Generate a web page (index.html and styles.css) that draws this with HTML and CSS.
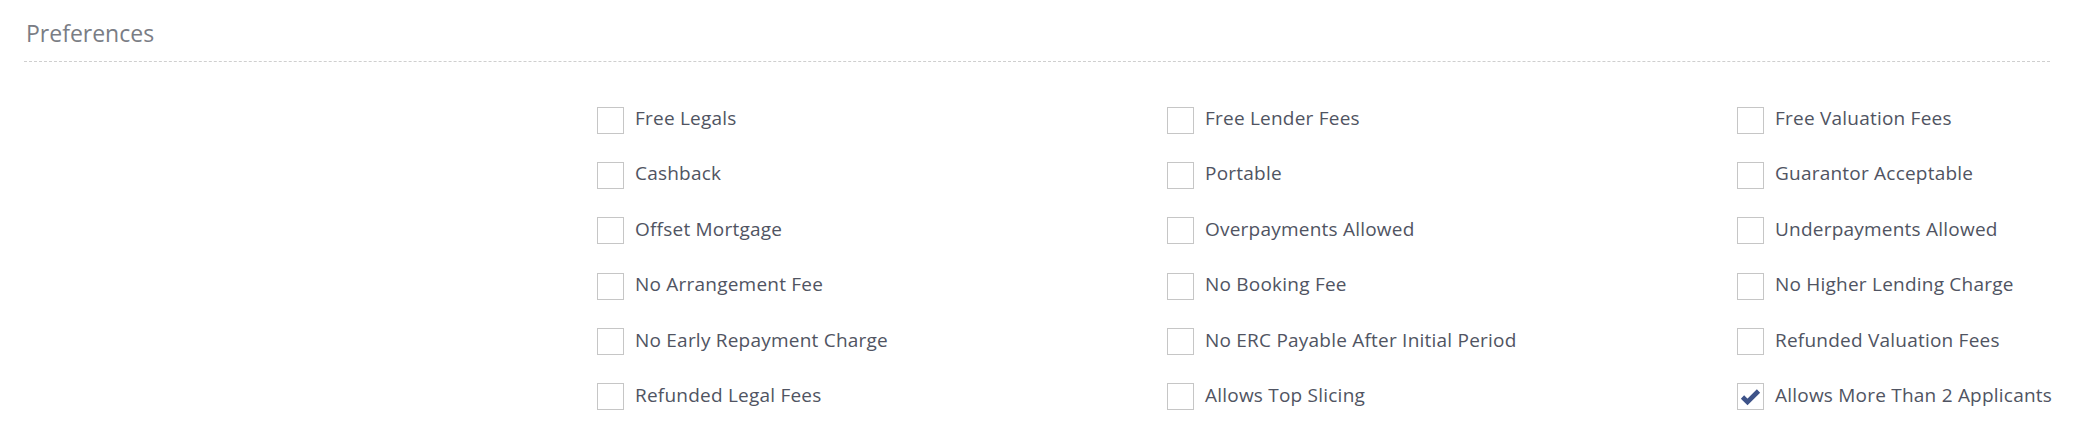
FILE: index.html
```html
<!DOCTYPE html>
<html lang="en">
<head>
<meta charset="utf-8">
<title>Preferences</title>
<link rel="stylesheet" href="styles.css">
</head>
<body>
<section class="panel">
  <h2 class="panel-title">Preferences</h2>
  <div class="options">
    <label class="option"><span class="box"></span><span class="text">Free Legals</span></label>
    <label class="option"><span class="box"></span><span class="text">Free Lender Fees</span></label>
    <label class="option"><span class="box"></span><span class="text">Free Valuation Fees</span></label>

    <label class="option"><span class="box"></span><span class="text">Cashback</span></label>
    <label class="option"><span class="box"></span><span class="text">Portable</span></label>
    <label class="option"><span class="box"></span><span class="text">Guarantor Acceptable</span></label>

    <label class="option"><span class="box"></span><span class="text">Offset Mortgage</span></label>
    <label class="option"><span class="box"></span><span class="text">Overpayments Allowed</span></label>
    <label class="option"><span class="box"></span><span class="text">Underpayments Allowed</span></label>

    <label class="option"><span class="box"></span><span class="text">No Arrangement Fee</span></label>
    <label class="option"><span class="box"></span><span class="text">No Booking Fee</span></label>
    <label class="option"><span class="box"></span><span class="text">No Higher Lending Charge</span></label>

    <label class="option"><span class="box"></span><span class="text">No Early Repayment Charge</span></label>
    <label class="option"><span class="box"></span><span class="text">No ERC Payable After Initial Period</span></label>
    <label class="option"><span class="box"></span><span class="text">Refunded Valuation Fees</span></label>

    <label class="option"><span class="box"></span><span class="text">Refunded Legal Fees</span></label>
    <label class="option"><span class="box"></span><span class="text">Allows Top Slicing</span></label>
    <label class="option"><span class="box checked"><svg class="tick" viewBox="0 0 27 27" width="27" height="27"><polyline points="5.5,14 10.5,19 21.5,8" fill="none" stroke="#3e5389" stroke-width="4.6" stroke-linejoin="miter"/></svg></span><span class="text">Allows More Than 2 Applicants</span></label>
  </div>
</section>
</body>
</html>
```

FILE: styles.css
```css
html, body {
  margin: 0;
  padding: 0;
  background: #ffffff;
}

body {
  font-family: "Open Sans", "Liberation Sans", sans-serif;
  color: #555a66;
}

.panel {
  padding: 0 34px 0 24px;
}

.panel-title {
  margin: 0;
  padding: 17px 0 12px 2px;
  font-size: 23px;
  line-height: 32px;
  font-weight: 400;
  color: #7a7d85;
  border-bottom: 1px dashed #cfcfcf;
}

.options {
  display: grid;
  grid-template-columns: 570px 570px auto;
  row-gap: 28.4px;
  margin: 44.5px 0 0 573px;
}

.option {
  display: flex;
  align-items: center;
  gap: 11px;
  height: 27px;
}

.box {
  box-sizing: border-box;
  width: 27px;
  height: 27px;
  flex: 0 0 27px;
  border: 1px solid #c6c6c6;
  background: #fff;
  position: relative;
}

.tick {
  position: absolute;
  left: -1px;
  top: -1px;
}

.text {
  font-size: 19px;
  letter-spacing: 0.22px;
  line-height: 27px;
  padding-bottom: 3px;
  white-space: nowrap;
  color: #505462;
}
```
